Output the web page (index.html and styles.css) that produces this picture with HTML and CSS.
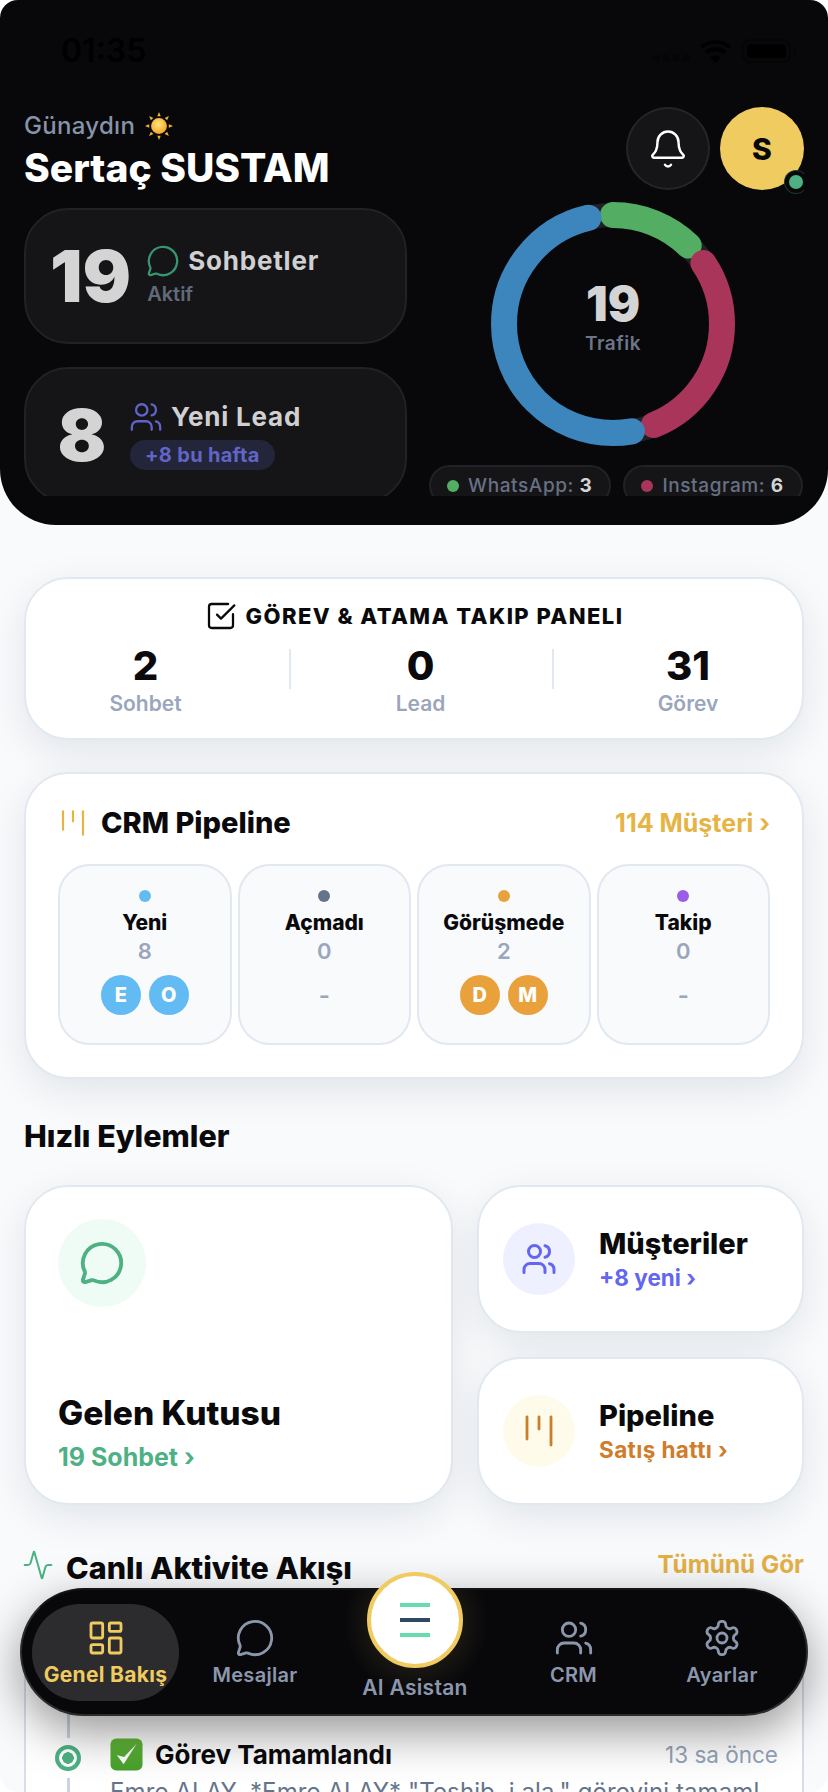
FILE: index.html
```html
<!DOCTYPE html>
<html lang="tr">
<head>
<meta charset="utf-8">
<title>Genel Bakış</title>
<link rel="stylesheet" href="styles.css">
</head>
<body>
<svg class="sprite" aria-hidden="true">
  <symbol id="i-chat" viewBox="0 0 24 24"><path d="M2.992 16.342a2 2 0 0 1 .094 1.167l-1.065 3.29a1 1 0 0 0 1.236 1.168l3.413-.998a2 2 0 0 1 1.099.092 10 10 0 1 0-4.777-4.719"/></symbol>
  <symbol id="i-users" viewBox="0 0 24 24"><path d="M16 21v-2a4 4 0 0 0-4-4H6a4 4 0 0 0-4 4v2"/><circle cx="9" cy="7" r="4"/><path d="M22 21v-2a4 4 0 0 0-3-3.87"/><path d="M16 3.13a4 4 0 0 1 0 7.75"/></symbol>
  <symbol id="i-bell" viewBox="0 0 24 24"><path d="M10.268 21a2 2 0 0 0 3.464 0"/><path d="M3.262 15.326A1 1 0 0 0 4 17h16a1 1 0 0 0 .74-1.673C19.41 13.956 18 12.499 18 8A6 6 0 0 0 6 8c0 4.499-1.411 5.956-2.738 7.326"/></symbol>
  <symbol id="i-check" viewBox="0 0 24 24"><path d="M21 10.656V19a2 2 0 0 1-2 2H5a2 2 0 0 1-2-2V5a2 2 0 0 1 2-2h12.344"/><path d="m9 11 3 3L22 4"/></symbol>
  <symbol id="i-kanban" viewBox="0 0 24 24"><path d="M6 5v11"/><path d="M12 5v6"/><path d="M18 5v14"/></symbol>
  <symbol id="i-activity" viewBox="0 0 24 24"><path d="M22 12h-2.48a2 2 0 0 0-1.93 1.46l-2.35 8.36a.25.25 0 0 1-.48 0L9.24 2.18a.25.25 0 0 0-.48 0l-2.35 8.36A2 2 0 0 1 4.49 12H2"/></symbol>
  <symbol id="i-dash" viewBox="0 0 24 24"><rect x="3" y="3" width="7" height="9" rx="1"/><rect x="14" y="3" width="7" height="5" rx="1"/><rect x="14" y="12" width="7" height="9" rx="1"/><rect x="3" y="16" width="7" height="5" rx="1"/></symbol>
  <symbol id="i-gear" viewBox="0 0 24 24"><path d="M12.22 2h-.44a2 2 0 0 0-2 2v.18a2 2 0 0 1-1 1.73l-.43.25a2 2 0 0 1-2 0l-.15-.08a2 2 0 0 0-2.73.73l-.22.38a2 2 0 0 0 .73 2.73l.15.1a2 2 0 0 1 1 1.72v.51a2 2 0 0 1-1 1.74l-.15.09a2 2 0 0 0-.73 2.73l.22.38a2 2 0 0 0 2.73.73l.15-.08a2 2 0 0 1 2 0l.43.25a2 2 0 0 1 1 1.73V20a2 2 0 0 0 2 2h.44a2 2 0 0 0 2-2v-.18a2 2 0 0 1 1-1.73l.43-.25a2 2 0 0 1 2 0l.15.08a2 2 0 0 0 2.73-.73l.22-.39a2 2 0 0 0-.73-2.73l-.15-.08a2 2 0 0 1-1-1.74v-.5a2 2 0 0 1 1-1.74l.15-.09a2 2 0 0 0 .73-2.73l-.22-.38a2 2 0 0 0-2.73-.73l-.15.08a2 2 0 0 1-2 0l-.43-.25a2 2 0 0 1-1-1.73V4a2 2 0 0 0-2-2z"/><circle cx="12" cy="12" r="3"/></symbol>
</svg>

<div class="screen">
  <header class="hero">
    <div class="status">
      <span class="clock">01:35</span>
      <div class="status-icons">
        <svg class="signal" viewBox="0 0 38 8"><circle cx="4" cy="4" r="3.4"/><circle cx="14" cy="4" r="3.4"/><circle cx="24" cy="4" r="3.4"/><circle cx="34" cy="4" r="3.4"/></svg>
        <svg class="wifi" viewBox="0 0 32 24"><path d="M16 24 10.6 18.2a8 8 0 0 1 10.8 0z"/><path d="M7.6 15a12.4 12.4 0 0 1 16.800 0l3-3.200a17 17 0 0 0-22.800 0z"/><path d="M2 9.300a20.500 20.500 0 0 1 28 0l2-3A24.500 24.500 0 0 0 0 6.300z"/></svg>
        <div class="battery"><span class="battery-fill"></span></div>
        <span class="battery-cap"></span>
      </div>
    </div>

    <div class="hero-body">
      <div class="hero-left">
        <p class="greet">Günaydın
          <svg class="sun" viewBox="0 0 30 30">
            <defs><radialGradient id="sunfill" cx="45%" cy="40%" r="60%"><stop offset="0" stop-color="#FFE680"/><stop offset="1" stop-color="#F5A524"/></radialGradient></defs>
            <g fill="#F6B42B"><path d="M15 0l1.800 4.500h-3.600z"/><path d="M15 30l-1.800-4.500h3.600z"/><path d="M0 15l4.500-1.800v3.600z"/><path d="M30 15l-4.500 1.800v-3.600z"/><path d="M4.400 4.400l4.500 1.900-2.600 2.600z"/><path d="M25.600 25.600l-4.500-1.900 2.600-2.600z"/><path d="M25.600 4.400l-1.900 4.500-2.600-2.600z"/><path d="M4.400 25.600l1.900-4.500 2.600 2.600z"/></g>
            <circle cx="15" cy="15" r="8.500" fill="url(#sunfill)"/>
          </svg>
        </p>
        <h1 class="name">Sertaç SUSTAM</h1>

        <div class="stat">
          <span class="stat-num">19</span>
          <div class="stat-text">
            <div class="stat-head"><svg class="ico stat-ico tone-green"><use href="#i-chat"/></svg><span>Sohbetler</span></div>
            <span class="stat-sub">Aktif</span>
          </div>
        </div>
        <div class="stat">
          <span class="stat-num">8</span>
          <div class="stat-text">
            <div class="stat-head"><svg class="ico stat-ico tone-indigo"><use href="#i-users"/></svg><span>Yeni Lead</span></div>
            <span class="stat-pill">+8 bu hafta</span>
          </div>
        </div>
      </div>

      <div class="hero-right">
        <div class="hero-actions">
          <button class="bell"><svg class="ico"><use href="#i-bell"/></svg></button>
          <div class="me">S<span class="me-dot"></span></div>
        </div>
        <div class="donut">
          <svg viewBox="0 0 244 244">
            <circle class="ring ring-track" cx="122" cy="122" r="109" pathLength="360"/>
            <circle class="ring ring-green" cx="122" cy="122" r="109" pathLength="360" stroke-dasharray="46 360" stroke-dashoffset="2"/>
            <circle class="ring ring-red" cx="122" cy="122" r="109" pathLength="360" stroke-dasharray="102 360" stroke-dashoffset="-56"/>
            <circle class="ring ring-blue" cx="122" cy="122" r="109" pathLength="360" stroke-dasharray="177 360" stroke-dashoffset="-170"/>
          </svg>
          <div class="donut-label"><strong>19</strong><span>Trafik</span></div>
        </div>
        <div class="legend">
          <span class="chip"><i class="chip-dot dot-wa"></i><span>WhatsApp: <b>3</b></span></span>
          <span class="chip"><i class="chip-dot dot-ig"></i><span>Instagram: <b>6</b></span></span>
        </div>
      </div>
    </div>
  </header>

  <main class="content">
    <section class="card tasks">
      <h2 class="tasks-title"><svg class="ico"><use href="#i-check"/></svg>GÖREV &amp; ATAMA TAKIP PANELI</h2>
      <div class="tasks-row">
        <div class="task"><strong>2</strong><span>Sohbet</span></div>
        <div class="task"><strong>0</strong><span>Lead</span></div>
        <div class="task"><strong>31</strong><span>Görev</span></div>
      </div>
    </section>

    <section class="card pipeline">
      <div class="pipe-head">
        <h2><svg class="ico"><use href="#i-kanban"/></svg>CRM Pipeline</h2>
        <a class="pipe-link">114 Müşteri ›</a>
      </div>
      <div class="stages">
        <div class="stage"><i class="stage-dot c-blue"></i><b>Yeni</b><em>8</em><div class="people"><span class="c-blue">E</span><span class="c-blue">O</span></div></div>
        <div class="stage"><i class="stage-dot c-slate"></i><b>Açmadı</b><em>0</em><div class="people none">-</div></div>
        <div class="stage"><i class="stage-dot c-amber"></i><b>Görüşmede</b><em>2</em><div class="people"><span class="c-amber">D</span><span class="c-amber">M</span></div></div>
        <div class="stage"><i class="stage-dot c-violet"></i><b>Takip</b><em>0</em><div class="people none">-</div></div>
      </div>
    </section>

    <h2 class="section-title quick-title">Hızlı Eylemler</h2>
    <section class="quick">
      <a class="card tile-large">
        <span class="tile-icon tile-icon-lg bg-mint"><svg class="ico"><use href="#i-chat"/></svg></span>
        <span class="tile-text">
          <b class="large-name">Gelen Kutusu</b>
          <small class="large-sub">19 Sohbet ›</small>
        </span>
      </a>
      <a class="card tile">
        <span class="tile-icon bg-indigo"><svg class="ico"><use href="#i-users"/></svg></span>
        <span class="tile-text"><b>Müşteriler</b><small class="sub-indigo">+8 yeni ›</small></span>
      </a>
      <a class="card tile">
        <span class="tile-icon bg-cream"><svg class="ico ico-bars"><use href="#i-kanban"/></svg></span>
        <span class="tile-text"><b>Pipeline</b><small class="sub-orange">Satış hattı ›</small></span>
      </a>
    </section>

    <div class="feed-head">
      <h2 class="section-title"><svg class="ico"><use href="#i-activity"/></svg>Canlı Aktivite Akışı</h2>
      <a class="feed-link">Tümünü Gör</a>
    </div>
    <section class="feed">
      <div class="rail">
        <span class="rail-line rail-top"></span>
        <span class="rail-dot"></span>
        <span class="rail-line"></span>
      </div>
      <div class="event">
        <div class="event-head">
          <svg class="tick" viewBox="0 0 34 34">
            <defs><linearGradient id="tickfill" x1="0" y1="0" x2="0" y2="1"><stop offset="0" stop-color="#63B83A"/><stop offset="1" stop-color="#46A02C"/></linearGradient></defs>
            <rect width="33" height="33" x=".5" y=".5" rx="6" fill="url(#tickfill)"/>
            <path d="M7 17.500 14 27 27.500 6 14.500 19.500z" fill="#fff"/>
          </svg>
          <b>Görev Tamamlandı</b>
          <time>13 sa önce</time>
        </div>
        <p>Emre ALAY, *Emre ALAY* "Teshib, i ala." görevini tamaml</p>
      </div>
    </section>
  </main>

  <nav class="dock">
    <a class="dock-item is-active"><svg class="ico"><use href="#i-dash"/></svg><span>Genel Bakış</span></a>
    <a class="dock-item"><svg class="ico"><use href="#i-chat"/></svg><span>Mesajlar</span></a>
    <a class="dock-item dock-ai">
      <span class="ai-btn"><i class="bar bar-teal"></i><i class="bar bar-navy"></i><i class="bar bar-teal"></i></span>
      <span>AI Asistan</span>
    </a>
    <a class="dock-item"><svg class="ico"><use href="#i-users"/></svg><span>CRM</span></a>
    <a class="dock-item"><svg class="ico"><use href="#i-gear"/></svg><span>Ayarlar</span></a>
  </nav>
</div>
</body>
</html>
```

FILE: styles.css
```css
* { box-sizing: border-box; margin: 0; padding: 0; }

html, body { background: #fff; }

body {
  width: 828px;
  height: 1792px;
  overflow: hidden;
  font-family: Inter, "Noto Sans", sans-serif;
  font-optical-sizing: none;
  color: #0a0a0c;
}

.sprite { display: none; }

.ico {
  fill: none;
  stroke: currentColor;
  stroke-width: 2;
  stroke-linecap: round;
  stroke-linejoin: round;
  flex: none;
}

.screen {
  position: relative;
  width: 828px;
  height: 1792px;
  overflow: hidden;
  border-radius: 18px;
  background: #f8fafc;
}

/* Dark header */
.hero {
  height: 525px;
  padding: 0 24px;
  background: #08080b;
  border-radius: 0 0 56px 56px;
}

.status {
  height: 94px;
  padding: 33px 8px 0 37px;
  display: flex;
  justify-content: space-between;
  align-items: flex-start;
}

.clock {
  font-size: 32px;
  line-height: 36px;
  font-weight: 600;
  color: #000;
}

.status-icons {
  display: flex;
  align-items: center;
  height: 36px;
}

.signal { width: 38px; height: 8px; fill: #050507; margin: 14px 10px 0 0; }
.wifi { width: 31px; height: 23px; fill: #000; margin-right: 11px; }

.battery {
  width: 49px;
  height: 24px;
  padding: 3px;
  border: 2px solid #050507;
  border-radius: 8px;
}

.battery-fill { display: block; height: 100%; background: #000; border-radius: 4px; }
.battery-cap { width: 3px; height: 8px; margin-left: 2px; background: #050507; border-radius: 0 2px 2px 0; }

.hero-body {
  display: flex;
  justify-content: space-between;
  height: 402px;
  overflow: hidden;
}

.hero-left { width: 383px; }

.greet {
  margin-top: 17px;
  height: 30px;
  display: flex;
  align-items: center;
  gap: 10px;
  font-size: 24px;
  font-weight: 500;
  line-height: 30px;
  letter-spacing: .3px;
  color: #8793a8;
}

.sun { width: 28px; height: 28px; }

.name {
  margin-top: 4px;
  font-size: 39px;
  line-height: 46px;
  font-weight: 800;
  color: #fff;
  white-space: nowrap;
}

.stat {
  height: 136px;
  margin-top: 17px;
  padding-left: 24px;
  display: flex;
  align-items: center;
  gap: 16px;
  background: #151518;
  border: 2px solid #222226;
  border-radius: 44px;
}

.stat + .stat { margin-top: 23px; }

.stat-num {
  min-width: 64px;
  text-align: center;
  font-size: 72px;
  line-height: 1;
  font-weight: 900;
  color: #d4d4d4;
}

.stat-text { display: flex; flex-direction: column; align-items: flex-start; margin-top: -1px; }

.stat-head {
  display: flex;
  align-items: center;
  gap: 8px;
  font-size: 26px;
  line-height: 34px;
  font-weight: 700;
  letter-spacing: .8px;
  color: #d0d0d2;
}

.stat-ico { width: 34px; height: 34px; margin-left: -1px; stroke-width: 1.6; }
.tone-green { color: #37966f; }
.tone-indigo { color: #5f64c6; }

.stat-sub {
  margin-top: 3px;
  font-size: 20px;
  line-height: 26px;
  font-weight: 600;
  color: #626a7a;
}

.stat-pill {
  margin-top: 6px;
  padding: 0 15px;
  height: 30px;
  border-radius: 15px;
  background: #23253b;
  font-size: 20px;
  line-height: 30px;
  font-weight: 700;
  letter-spacing: .3px;
  color: #6166c5;
  white-space: nowrap;
}

.hero-right { width: 375px; display: flex; flex-direction: column; }

.hero-actions {
  margin-top: 13px;
  display: flex;
  justify-content: flex-end;
  gap: 10px;
}

.bell {
  width: 84px;
  height: 83px;
  display: grid;
  place-items: center;
  background: #151518;
  border: 2px solid #252528;
  border-radius: 50%;
  color: #fff;
}

.bell svg { width: 42px; height: 42px; stroke-width: 1.4; }

.me {
  position: relative;
  width: 84px;
  height: 83px;
  display: grid;
  place-items: center;
  border-radius: 50%;
  background: #f0cb60;
  font-size: 30px;
  font-weight: 800;
  color: #08080b;
}

.me-dot {
  position: absolute;
  right: -3px;
  bottom: -3px;
  width: 22px;
  height: 22px;
  background: #4db184;
  border: 4px solid #08080b;
  box-shadow: 0 0 0 1px #1c3a30;
  border-radius: 50%;
}

.donut {
  position: relative;
  width: 244px;
  height: 244px;
  margin: 12px 0 0 62px;
  flex: none;
}

.donut svg { display: block; width: 244px; height: 244px; transform: rotate(-90deg); }

.ring { fill: none; stroke-width: 26; }
.ring-track { stroke: #212124; stroke-width: 24; }
.ring-green { stroke: #53ad63; stroke-linecap: round; }
.ring-red { stroke: #a9355b; stroke-linecap: round; }
.ring-blue { stroke: #3d85bd; stroke-linecap: round; }

.donut-label {
  position: absolute;
  inset: 0;
  padding-bottom: 14px;
  display: flex;
  flex-direction: column;
  align-items: center;
  justify-content: center;
  gap: 4px;
}

.donut-label strong {
  font-size: 48px;
  line-height: 50px;
  font-weight: 900;
  color: #d4d4d4;
}

.donut-label span {
  font-size: 19px;
  line-height: 22px;
  font-weight: 600;
  letter-spacing: .5px;
  color: #6d7688;
}

.legend { display: flex; gap: 12px; margin-top: 19px; }

.chip {
  height: 41px;
  padding: 0 17px 0 16px;
  display: flex;
  align-items: center;
  flex: none;
  background: #151518;
  border: 2px solid #222226;
  border-radius: 21px;
  font-size: 19px;
  font-weight: 500;
  letter-spacing: .6px;
  color: #687083;
  white-space: nowrap;
}

.chip b { color: #d4d4d4; font-weight: 700; }
.chip-dot { width: 12px; height: 12px; margin-right: 9px; border-radius: 50%; flex: none; }
.dot-wa { background: #53ad63; }
.dot-ig { background: #a9355b; }

/* Light content */
.content { padding: 52px 24px 0; }

.card {
  background: #fff;
  border: 2px solid #e2e8f0;
  border-radius: 44px;
  box-shadow: 0 12px 40px rgba(15, 23, 42, .09);
}

.tasks { height: 163px; padding-top: 20px; }

.tasks-title {
  display: flex;
  justify-content: center;
  align-items: center;
  gap: 9px;
  font-size: 22px;
  line-height: 34px;
  font-weight: 800;
  letter-spacing: 1.45px;
  color: #0a0a0c;
}

.tasks-title svg { width: 32px; height: 32px; stroke-width: 1.7; }

.tasks-row { display: grid; grid-template-columns: 263px 263px 1fr; margin-top: 10px; }

.task {
  display: flex;
  flex-direction: column;
  align-items: center;
  position: relative;
}

.task:first-child { padding-right: 24px; }
.task:last-child { padding-left: 22px; }

.task + .task::before {
  content: "";
  position: absolute;
  left: 0;
  top: 6px;
  width: 2px;
  height: 40px;
  background: #e2e8f0;
}

.task strong { font-size: 40px; line-height: 46px; font-weight: 800; }

.task span {
  margin-top: 2px;
  font-size: 21px;
  line-height: 26px;
  font-weight: 600;
  color: #9aa6bc;
}

.pipeline { height: 307px; margin-top: 32px; padding: 0 32px; }

.pipe-head {
  display: flex;
  justify-content: space-between;
  align-items: center;
  height: 90px;
  padding-top: 7px;
}

.pipe-head h2 {
  display: flex;
  align-items: center;
  gap: 8px;
  font-size: 29px;
  font-weight: 800;
}

.pipe-head svg { width: 40px; height: 40px; color: #e6b345; stroke-width: 1.3; margin-left: -5px; }

.pipe-link { font-size: 25px; font-weight: 700; color: #e6b345; }

.stages { display: grid; grid-template-columns: repeat(4, 1fr); gap: 6px; }

.stage {
  height: 181px;
  padding-top: 24px;
  display: flex;
  flex-direction: column;
  align-items: center;
  background: #f8fafc;
  border: 2px solid #e2e8f0;
  border-radius: 32px;
}

.stage-dot { width: 12px; height: 12px; border-radius: 50%; }
.stage b { margin-top: 6px; font-size: 21px; line-height: 30px; font-weight: 800; }
.stage em { font-style: normal; font-size: 22px; line-height: 26px; font-weight: 600; color: #9aa6bc; }

.people { display: flex; gap: 8px; margin-top: 11px; height: 40px; align-items: center; color: #9aa6bc; }
.people.none { font-size: 24px; font-weight: 600; }
.people span {
  width: 40px;
  height: 40px;
  display: grid;
  place-items: center;
  border-radius: 50%;
  font-size: 20px;
  font-weight: 800;
  color: #fff;
}

.c-blue { background: #62bbf3; }
.c-slate { background: #64748b; }
.c-amber { background: #e9a23b; }
.c-violet { background: #9b5de8; }

.section-title {
  display: flex;
  align-items: center;
  gap: 12px;
  font-size: 30.500px;
  font-weight: 800;
  line-height: 36px;
}

.quick-title { margin-top: 39px; }

.quick {
  display: grid;
  grid-template-columns: 429px 1fr;
  grid-template-rows: 148px 148px;
  column-gap: 24px;
  row-gap: 24px;
  margin-top: 31px;
}

.tile-large {
  grid-row: span 2;
  padding: 32px 32px 30px;
  display: flex;
  flex-direction: column;
  justify-content: space-between;
}

.tile-text { display: flex; flex-direction: column; }

.tile {
  display: flex;
  align-items: center;
  gap: 24px;
  padding-left: 24px;
}

.tile b { font-size: 29px; line-height: 38px; font-weight: 800; }
.tile small { font-size: 22.500px; line-height: 30px; font-weight: 700; }

.large-name { font-size: 33.500px; line-height: 44px; font-weight: 800; }
.large-sub { font-size: 25px; line-height: 32px; font-weight: 700; color: #4db184; margin-top: 6px; }
.sub-indigo { color: #6366f1; }
.sub-orange { color: #cf7c2b; letter-spacing: .4px; }

.tile-icon {
  width: 72px;
  height: 72px;
  display: grid;
  place-items: center;
  border-radius: 50%;
  flex: none;
}

.tile-icon svg { width: 36px; height: 36px; }
.tile-icon .ico-bars { width: 48px; height: 48px; stroke-width: 1.4; }
.tile-icon-lg { width: 88px; height: 88px; color: #4db184; }
.tile-icon-lg svg { width: 46px; height: 46px; }
.bg-mint { background: #effbf5; }
.bg-indigo { background: #eef0ff; color: #6366f1; }
.bg-cream { background: #fffbeb; color: #ca7e2b; }

.feed-head {
  display: flex;
  justify-content: space-between;
  align-items: center;
  margin-top: 45px;
}

.feed-head svg { width: 32px; height: 32px; color: #4db184; stroke-width: 1.5; margin: -6px 0 0 -2px; }
.feed-link { font-size: 24.300px; font-weight: 700; color: #e3af45; margin-top: -8px; }

.feed {
  height: 260px;
  margin-top: 12px;
  padding-left: 29px;
  display: flex;
  gap: 29px;
  background: #fff;
  border: 2px solid #d8dde7;
  border-radius: 44px;
}

.rail { width: 26px; display: flex; flex-direction: column; align-items: center; gap: 7px; }
.rail-line { flex: 1; width: 3px; background: #cbd5e1; }
.rail-top { flex: none; height: 138px; }

.rail-dot {
  width: 26px;
  height: 26px;
  flex: none;
  border: 4px solid #4db184;
  border-radius: 50%;
  background: radial-gradient(circle, #4db184 0 5.500px, #fff 6px);
}

.event { flex: 1; padding: 137px 24px 0 0; }

.event-head { display: flex; align-items: center; gap: 12px; height: 34px; }
.tick { width: 33px; height: 33px; flex: none; }
.event-head b { flex: 1; font-size: 26px; font-weight: 700; }
.event-head time { font-size: 22.500px; color: #94a3b8; }

.event p {
  margin-top: 6px;
  font-size: 24px;
  line-height: 30px;
  letter-spacing: .1px;
  color: #64748b;
  white-space: nowrap;
  overflow: hidden;
}

/* Floating tab bar */
.dock {
  position: absolute;
  left: 20px;
  top: 1588px;
  width: 788px;
  height: 128px;
  padding: 14px 10px;
  display: grid;
  grid-template-columns: 147px 152px 168px 149px 1fr;
  background: radial-gradient(circle 72px at 394px 33px, rgba(240, 203, 96, .2), transparent), #08080b;
  border: 2px solid #2b2b2d;
  border-top-color: #141416;
  border-radius: 64px;
  box-shadow: 0 16px 48px rgba(0, 0, 0, .42);
}

.dock-item {
  display: flex;
  flex-direction: column;
  align-items: center;
  justify-content: flex-start;
  padding-top: 14px;
  gap: 4px;
  font-size: 20px;
  line-height: 26px;
  font-weight: 600;
  letter-spacing: .3px;
  color: #8c97ad;
  border-radius: 48px;
}

.dock-item svg { width: 40px; height: 40px; stroke-width: 1.7; }

.is-active {
  background: #2c2c2e;
  color: #f0cb60;
  font-size: 21px;
  font-weight: 700;
}

.dock-ai { gap: 7px; padding-top: 0; margin-top: -32px; font-size: 21px; }

.ai-btn {
  width: 96px;
  height: 96px;
  display: flex;
  flex-direction: column;
  align-items: center;
  justify-content: center;
  gap: 11px;
  background: #fff;
  border: 4px solid #f0cb60;
  border-radius: 50%;
}

.bar { width: 30px; height: 4px; }
.bar-teal { background: #66ddb0; }
.bar-navy { background: #2e4a62; }
```
